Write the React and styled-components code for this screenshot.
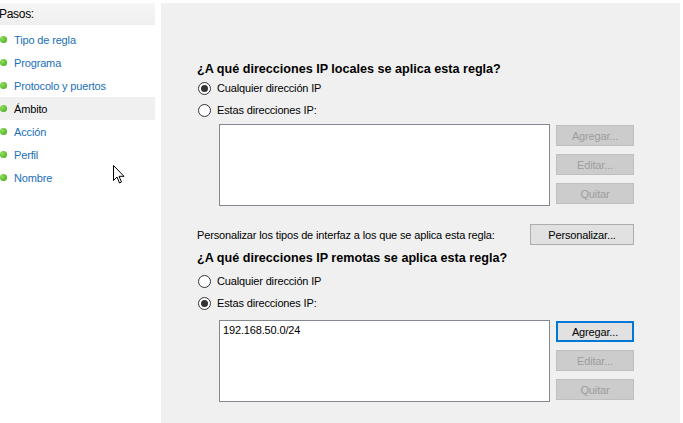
import React from 'react';
import styled, { createGlobalStyle } from 'styled-components';

const Global = createGlobalStyle`
  body {
    margin: 0;
    background: #ffffff;
    font-family: "Liberation Sans", Arial, sans-serif;
    font-size: 12px;
    color: #000;
  }
`;

const Window = styled.div`
  position: relative;
  display: flex;
  width: 683px;
  height: 423px;
  padding-top: 3px;
  box-sizing: border-box;
  overflow: hidden;
  background: #ffffff;
`;

const Sidebar = styled.div`
  width: 155px;
  margin-right: 6px;
  display: flex;
  flex-direction: column;
`;

const StepsHeader = styled.div`
  height: 22px;
  line-height: 22px;
  background: linear-gradient(#f6f6f6, #efefef);
  font-size: 12px;
  letter-spacing: -0.3px;
  margin-left: -1px;
`;

const StepList = styled.div`
  padding-top: 3px;
  display: flex;
  flex-direction: column;
`;

const Step = styled.div`
  height: 23px;
  display: flex;
  align-items: center;
  gap: 7px;
  background: ${p => (p.active ? '#f0f0f0' : 'transparent')};
  color: ${p => (p.active ? '#000' : '#1a6fb8')};
  font-size: 11px;
  letter-spacing: -0.15px;
`;

const Bullet = styled.span`
  width: 7px;
  height: 7px;
  border-radius: 50%;
  background: radial-gradient(circle at 35% 35%, #8fe05a, #3aa317);
  flex-shrink: 0;
`;

const Main = styled.div`
  flex: 1;
  background: #f0f0f0;
  margin-right: 3px;
  padding: 58px 0 0 36px;
  display: flex;
  flex-direction: column;
`;

const Heading = styled.div`
  font-weight: bold;
  font-size: 12.6px;
  line-height: 16px;
  margin-top: ${p => p.top || 0}px;
`;

const RadioRow = styled.label`
  display: flex;
  align-items: center;
  gap: 6px;
  height: 16px;
  margin-top: ${p => p.top || 0}px;
  font-size: 11px;
  letter-spacing: -0.15px;
  margin-left: 1px;
`;

const RadioCircle = styled.span`
  width: 11px;
  height: 11px;
  border: 1px solid #333;
  border-radius: 50%;
  background: #fff;
  display: flex;
  align-items: center;
  justify-content: center;
  &::after {
    content: '';
    width: 7px;
    height: 7px;
    border-radius: 50%;
    background: ${p => (p.checked ? '#333' : 'transparent')};
  }
`;

const ListArea = styled.div`
  display: flex;
  gap: 6px;
  margin-left: 22px;
  margin-top: ${p => p.top || 0}px;
`;

const ListBox = styled.div`
  background: #fff;
  border: 1px solid #828790;
  padding: 3px;
  width: 323px;
  height: 74px;
  font-size: 11px;
  letter-spacing: -0.15px;
`;

const ButtonCol = styled.div`
  display: flex;
  flex-direction: column;
  gap: 8px;
  padding-top: 1px;
`;

const Button = styled.div`
  width: ${p => p.w || 78}px;
  height: 21px;
  box-sizing: border-box;
  display: flex;
  align-items: center;
  justify-content: center;
  font-size: 11px;
  letter-spacing: -0.15px;
  background: ${p => (p.disabled ? '#cccccc' : '#e1e1e1')};
  color: ${p => (p.disabled ? '#9d9d9d' : '#000')};
  border: ${p =>
    p.focused ? '2px solid #0078d7' : p.disabled ? '1px solid #bfbfbf' : '1px solid #adadad'};
`;

const CustomRow = styled.div`
  display: flex;
  align-items: center;
  justify-content: space-between;
  width: 437px;
  margin-top: 18px;
  font-size: 11px;
  letter-spacing: -0.15px;
`;

const Cursor = styled.svg`
  position: absolute;
  left: 113px;
  top: 165px;
`;

function Radio({ checked, top, children }) {
  return (
    <RadioRow top={top}>
      <RadioCircle checked={checked} />
      {children}
    </RadioRow>
  );
}

function AddressList({ top, items, focused, addEnabled }) {
  return (
    <ListArea top={top}>
      <ListBox>
        {items.map(i => (
          <div key={i}>{i}</div>
        ))}
      </ListBox>
      <ButtonCol>
        <Button disabled={!addEnabled} focused={focused}>Agregar...</Button>
        <Button disabled>Editar...</Button>
        <Button disabled>Quitar</Button>
      </ButtonCol>
    </ListArea>
  );
}

const pasos = ['Tipo de regla', 'Programa', 'Protocolo y puertos', 'Ámbito', 'Acción', 'Perfil', 'Nombre'];

export default function App() {
  return (
    <Window>
      <Global />
      <Sidebar>
        <StepsHeader>Pasos:</StepsHeader>
        <StepList>
          {pasos.map(p => (
            <Step key={p} active={p === 'Ámbito'}>
              <Bullet />
              {p}
            </Step>
          ))}
        </StepList>
      </Sidebar>
      <Main>
        <Heading>¿A qué direcciones IP locales se aplica esta regla?</Heading>
        <Radio checked top={3}>Cualquier dirección IP</Radio>
        <Radio top={6}>Estas direcciones IP:</Radio>
        <AddressList top={6} items={[]} />
        <CustomRow>
          <span>Personalizar los tipos de interfaz a los que se aplica esta regla:</span>
          <Button w={104}>Personalizar...</Button>
        </CustomRow>
        <Heading top={5}>¿A qué direcciones IP remotas se aplica esta regla?</Heading>
        <Radio top={7}>Cualquier dirección IP</Radio>
        <Radio checked top={6}>Estas direcciones IP:</Radio>
        <AddressList top={9} items={['192.168.50.0/24']} focused addEnabled />
      </Main>
      <Cursor width="12" height="19" viewBox="0 0 12 19">
        <path d="M0.5 0.5 L0.5 15.5 L4 12 L6.5 18 L8.5 17 L6 11.3 L11 11.3 Z" fill="#fff" stroke="#000" strokeWidth="1" strokeLinejoin="round" />
      </Cursor>
    </Window>
  );
}
